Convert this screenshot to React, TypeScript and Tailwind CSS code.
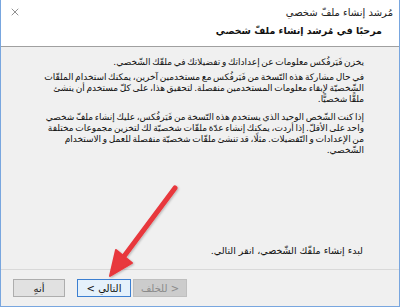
import { X } from 'lucide-react';

function WizardButton({ children, primary, disabled, width }: { children: React.ReactNode; primary?: boolean; disabled?: boolean; width: string }) {
  const base = 'h-[18px] flex items-center justify-center text-[10px] border';
  const look = disabled
    ? 'bg-[#cccccc] border-[#bfbfbf] text-[#8a8a8a]'
    : primary
    ? 'bg-[#e5f1fb] border-[#3c7fd1] text-[#111]'
    : 'bg-[#e1e1e1] border-[#adadad] text-[#111]';
  return (
    <div dir="rtl" className={`${base} ${look} ${width}`}>
      {children}
    </div>
  );
}

function Arrow() {
  return (
    <svg className="absolute left-0 top-0 pointer-events-none" width="400" height="307" viewBox="0 0 400 307">
      <defs>
        <filter id="sh" x="-20%" y="-20%" width="140%" height="140%">
          <feDropShadow dx="1" dy="1" stdDeviation="1" floodColor="#000" floodOpacity="0.25" />
        </filter>
      </defs>
      <g filter="url(#sh)" fill="#e8373c" stroke="#e8373c">
        <line x1="174" y1="188" x2="121" y2="259" strokeWidth="5" strokeLinecap="round" />
        <polygon points="109,276 131,263 115,250" strokeWidth="2" strokeLinejoin="round" />
      </g>
    </svg>
  );
}

function Para({ lines, className = '' }: { lines: string[]; className?: string }) {
  return (
    <div className={className}>
      {lines.map((l) => (
        <div key={l} className="whitespace-nowrap">
          {l}
        </div>
      ))}
    </div>
  );
}

export default function App() {
  return (
    <div
      className="relative w-[400px] h-[307px] bg-[#f0f0f0] border-l border-r border-b border-[#78a6df] flex flex-col overflow-hidden"
      style={{ fontFamily: '"DejaVu Sans", sans-serif' }}
    >
      <div dir="rtl" className="bg-white h-[47px] border-b border-[#a0a0a0] flex flex-col">
        <div className="h-[24px] flex items-center justify-between pr-[6px] pl-[8px]">
          <span className="text-[10px] text-[#222]">مُرشد إنشاء ملفّ شخصي</span>
          <X size={12} strokeWidth={1.3} className="text-[#555]" />
        </div>
        <div className="pr-[17px] text-[9.5px] font-bold text-[#111] leading-[14px]">مرحبًا في مُرشد إنشاء ملفّ شخصي</div>
      </div>

      <div dir="rtl" className="flex-1 flex flex-col pr-[35px] pt-[10px] text-[9px] leading-[11px] text-[#111] [word-spacing:-1.2px]">
        <Para lines={['يخزن فَيَرفُكس معلومات عن إعداداتك و تفضيلاتك في ملفّك الشّخصي.']} />
        <Para
          className="mt-[4px]"
          lines={[
            'في حال مشاركة هذه النّسخة من فَيَرفُكس مع مستخدمين آخرين، يمكنك استخدام الملفّات',
            'الشّخصيّة لإبقاء معلومات المستخدمين منفصلة. لتحقيق هذا، على كلّ مستخدم أن ينشئ',
            'ملفًّا شخصيًّا.',
          ]}
        />
        <Para
          className="mt-[7px]"
          lines={[
            'إذا كنت الشّخص الوحيد الذي يستخدم هذه النّسخة من فَيَرفُكس، عليك إنشاء ملفّ شخصي',
            'واحد على الأقلّ. إذا أردت، يمكنك إنشاء عدّة ملفّات شخصيّة لك لتخزين مجموعات مختلفة',
            'من الإعدادات و التّفضيلات. مثلًا، قد تنشئ ملفّات شخصيّة منفصلة للعمل و الاستخدام',
            'الشّخصي.',
          ]}
        />
        <div className="flex-1" />
        <p className="pr-[1px] mb-[13px] text-[9.5px] [word-spacing:0px]">لبدء إنشاء ملفّك الشّخصي، انقر التالي.</p>
      </div>

      <div className="h-[37px] border-t border-[#d9d9d9] flex items-start pt-[9px] pl-[12px]">
        <WizardButton width="w-[52px]">أنهِ</WizardButton>
        <div className="w-[12px]" />
        <WizardButton primary width="w-[54px]">التالي &gt;</WizardButton>
        <div className="w-[2px]" />
        <WizardButton disabled width="w-[54px]">&lt; للخلف</WizardButton>
      </div>

      <Arrow />
    </div>
  );
}
